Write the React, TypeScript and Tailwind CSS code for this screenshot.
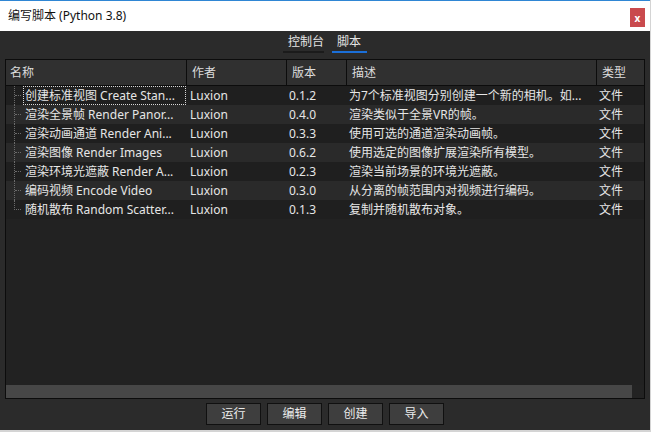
const ROWS = [
  { name: '创建标准视图 Create Stan...', author: 'Luxion', version: '0.1.2', desc: '为7个标准视图分别创建一个新的相机。如...', type: '文件' },
  { name: '渲染全景帧 Render Panor...', author: 'Luxion', version: '0.4.0', desc: '渲染类似于全景VR的帧。', type: '文件' },
  { name: '渲染动画通道 Render Ani...', author: 'Luxion', version: '0.3.3', desc: '使用可选的通道渲染动画帧。', type: '文件' },
  { name: '渲染图像 Render Images', author: 'Luxion', version: '0.6.2', desc: '使用选定的图像扩展渲染所有模型。', type: '文件' },
  { name: '渲染环境光遮蔽 Render A...', author: 'Luxion', version: '0.2.3', desc: '渲染当前场景的环境光遮蔽。', type: '文件' },
  { name: '编码视频 Encode Video', author: 'Luxion', version: '0.3.0', desc: '从分离的帧范围内对视频进行编码。', type: '文件' },
  { name: '随机散布 Random Scatter...', author: 'Luxion', version: '0.1.3', desc: '复制并随机散布对象。', type: '文件' },
];

const BUTTONS = ['运行', '编辑', '创建', '导入'];

function TreeGuide({ last }: { last: boolean }) {
  // dotted tree connector: vertical line + short branch at row middle
  return (
    <div className="flex h-full w-[17px] shrink-0 pl-[8px]">
      {last ? (
        <div className="h-[10px] w-[7px] border-b border-l border-dotted border-[#6b6b6b]" />
      ) : (
        <div className="h-full w-[7px] border-l border-dotted border-[#6b6b6b]">
          <div className="h-[10px] border-b border-dotted border-[#6b6b6b]" />
        </div>
      )}
    </div>
  );
}

export default function App() {
  return (
    <div className="flex h-[432px] w-[651px] flex-col border-r border-b-2 border-[#d4d4d4] bg-[#2b2b2b] font-['Noto_Sans','Noto_Sans_CJK_SC',sans-serif] text-[12px]">
      {/* Title bar */}
      <div className="flex h-[31px] shrink-0 items-start justify-between border-t border-[#2f86d4] bg-white">
        <span className="pl-[8px] pt-[6px] leading-[18px] text-[#111]">编写脚本 (Python 3.8)</span>
        <div className="mr-[5px] mt-[7px] flex h-[19px] w-[15px] items-center justify-center bg-[#c94a4d] text-[10px] font-bold leading-none text-white">
          x
        </div>
      </div>

      {/* Tabs */}
      <div className="flex h-[28px] shrink-0 justify-center gap-[8px] pt-[3px] text-[#e4e4e4]">
        <div className="h-fit w-[41px] border-b-2 border-[#1b1b1b] pb-px pl-[5px] leading-[16px]">控制台</div>
        <div className="h-fit w-[35px] border-b-2 border-[#1b6fd8] pb-px pl-[5px] leading-[16px]">脚本</div>
      </div>

      {/* Table */}
      <div className="mx-[5px] flex h-[340px] shrink-0 flex-col border border-[#0c0c0c] bg-[#222222] text-[#e6e6e6]">
        <div className="flex h-[26px] shrink-0 border-b border-[#0c0c0c] bg-[#303030] text-[#dcdcdc]">
          <div className="flex w-[181px] items-center border-r border-[#0c0c0c] pl-[4px]">名称</div>
          <div className="flex w-[100px] items-center border-r border-[#0c0c0c] pl-[5px]">作者</div>
          <div className="flex w-[60px] items-center border-r border-[#0c0c0c] pl-[5px]">版本</div>
          <div className="flex w-[250px] items-center border-r border-[#0c0c0c] pl-[5px]">描述</div>
          <div className="flex flex-1 items-center pl-[5px]">类型</div>
        </div>

        {ROWS.map((r, i) => (
          <div
            key={r.name}
            className={`flex h-[19px] shrink-0 leading-[17px] ${i % 2 === 0 ? 'bg-[#1f1f1f]' : 'bg-[#2a2a2a]'}`}
          >
            <div className="flex w-[181px] shrink-0">
              <TreeGuide last={i === ROWS.length - 1} />
              <span
                className={`mr-[1px] flex-1 truncate border pl-[1px] ${i === 0 ? 'border-dotted border-[#d8d8d8]' : 'border-transparent'}`}
              >
                {r.name}
              </span>
            </div>
            <div className="w-[100px] shrink-0 pl-[3px] leading-[19px]">{r.author}</div>
            <div className="w-[60px] shrink-0 pl-[2px] leading-[19px]">{r.version}</div>
            <div className="w-[250px] shrink-0 truncate pl-[2px] leading-[19px]">{r.desc}</div>
            <div className="flex-1 pl-[2px] leading-[19px]">{r.type}</div>
          </div>
        ))}

        <div className="flex-1" />

        {/* horizontal scrollbar */}
        <div className="flex h-[13px] shrink-0">
          <div className="w-[626px] bg-[#474747]" />
          <div className="flex-1 bg-[#232323]" />
        </div>
      </div>

      {/* Buttons */}
      <div className="mt-[4px] flex justify-center gap-[6px]">
        {BUTTONS.map(b => (
          <div
            key={b}
            className="flex h-[22px] w-[55px] items-center justify-center border border-[#101010] bg-[#3e3e3e] text-[#ececec]"
          >
            {b}
          </div>
        ))}
      </div>
    </div>
  );
}
